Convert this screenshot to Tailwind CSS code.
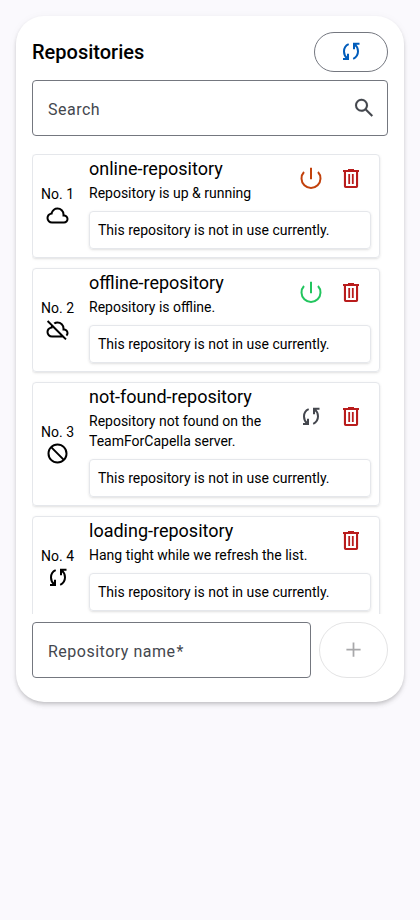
<!DOCTYPE html>
<html lang="en">
<head>
<meta charset="utf-8">
<title>Repositories</title>
<script src="https://cdn.jsdelivr.net/npm/@tailwindcss/browser@4"></script>
</head>
<body class="min-h-screen bg-[#faf9fd] p-4 font-['Roboto',sans-serif] text-sm text-black">
<svg class="hidden">
  <symbol id="sync" viewBox="0 0 24 24"><path fill="none" stroke="currentColor" stroke-width="2" d="M4 19H9V13.7M8.4 18.6C6.2 16.8 5 14.4 5 11.5C5 8.2 6.900 5.400 9.700 4.200M20.500 3.700H15V9.200M15.600 4.200C17.800 6 19 8.400 19 11.300C19 14.700 17.200 17.500 14.200 18.800"/></symbol>
  <symbol id="cloud" viewBox="20 -940 960 960"><path d="M260-160q-91 0-155.5-63T40-377q0-78 47-139t123-78q25-92 100-149t170-57q117 0 198.5 81.5T760-520q69 8 114.5 59.5T920-340q0 75-52.5 127.5T740-160H260Zm0-80h480q42 0 71-29t29-71q0-42-29-71t-71-29h-60v-80q0-83-58.5-141.5T480-720q-83 0-141.5 58.5T280-520h-20q-58 0-99 41t-41 99q0 58 41 99t99 41Z"/></symbol>
  <symbol id="cloud-off" viewBox="20 -940 960 960"><path d="M792-56 686-160H260q-92 0-156-64T40-380q0-77 47.5-137T210-594q3-8 6-15.5t6-16.5L56-792l56-56 736 736-56 56ZM260-240h346L284-562q-2 11-3 21t-1 21h-20q-58 0-99 41t-41 99q0 58 41 99t99 41Zm604 30-58-56q17-14 25.5-32.5T840-340q0-42-29-71t-71-29h-60v-80q0-83-58.5-141.5T480-720q-27 0-52 6.5T380-693l-58-58q35-24 74.5-36.5T480-800q117 0 198.5 81.5T760-520q69 8 114.5 59.5T920-340q0 39-15 72.5T864-210Z"/></symbol>
  <symbol id="block" viewBox="20 -940 960 960"><path d="M480-80q-83 0-156-31.5T197-197q-54-54-85.5-127T80-480q0-83 31.5-156T197-763q54-54 127-85.5T480-880q83 0 156 31.5T763-763q54 54 85.5 127T880-480q0 83-31.5 156T763-197q-54 54-127 85.5T480-80Zm0-80q54 0 104-17.5t92-50.5L228-676q-33 42-50.5 92T160-480q0 134 93 227t227 93Zm252-124q33-42 50.5-92T800-480q0-134-93-227t-227-93q-54 0-104 17.5T284-732l448 448Z"/></symbol>
  <symbol id="delete" viewBox="0 0 24 24"><path fill-rule="evenodd" d="M4 2.900H9V1.900H15V2.900H20V4.900H19.100V19.300Q19.100 21.100 17.300 21.100H6.700Q4.900 21.100 4.900 19.300V4.900H4ZM7 4.900V19H17V4.900ZM9.300 7.100H11.100V17H9.300ZM12.900 7.100H14.700V17H12.900Z"/></symbol>
  <symbol id="power" viewBox="0 0 28 28"><path fill="none" stroke="currentColor" stroke-width="2" d="M14 2.8V14.2M7 7A9.5 9.5 0 1 0 21 7"/></symbol>
  <symbol id="search" viewBox="0 -950 960 960"><path stroke="currentColor" stroke-width="4" d="M784-120 532-372q-30 24-69 38t-83 14q-109 0-184.500-75.500T120-580q0-109 75.500-184.500T380-840q109 0 184.500 75.500T640-580q0 44-14 83t-38 69l252 252-56 56ZM380-400q75 0 127.500-52.500T560-580q0-75-52.500-127.500T380-760q-75 0-127.500 52.500T200-580q0 75 52.500 127.500T380-400Z"/></symbol>
  <symbol id="add" viewBox="20 -945 960 960"><path d="M445-445H196v-70h249v-249h70v249h249v70H515v249h-70v-249Z"/></symbol>
</svg>

<main class="flex h-[686px] flex-col rounded-[28px] bg-white p-4 shadow-[0_2px_4px_-1px_rgba(0,0,0,0.2),0_4px_5px_0_rgba(0,0,0,0.06),0_1px_10px_0_rgba(0,0,0,0.04)]">
  <header class="flex h-10 items-center justify-between">
    <h1 class="text-xl font-medium leading-6">Repositories</h1>
    <button class="flex h-10 w-[74px] items-center justify-center rounded-full border border-[#74777f] text-[#005cbb]"><svg class="size-6 fill-current"><use href="#sync"/></svg></button>
  </header>

  <div class="mt-2 flex h-14 items-center justify-between rounded border border-[#74777f] pl-[15px] pr-[11px] text-[#44474e]">
    <span class="pt-1 text-base tracking-[0.5px]">Search</span>
    <svg class="size-6 fill-current"><use href="#search"/></svg>
  </div>

  <section class="mt-[18px] flex h-[460px] flex-col gap-2.5 overflow-hidden pr-2">
    <article class="flex shrink-0 items-center rounded border border-gray-200 pb-2 pl-2 pr-2 shadow-sm">
      <div class="flex w-12 shrink-0 flex-col pt-2 leading-5"><span>No. 1</span><svg class="ml-[5px] size-6 fill-current"><use href="#cloud"/></svg></div>
      <div class="min-w-0 grow">
        <div class="flex items-center justify-between">
          <div><h2 class="text-lg leading-7">online-repository</h2><p class="leading-5">Repository is up &amp; running</p></div>
          <div class="flex shrink-0"><span class="flex w-10 items-center justify-center text-[#c2410c]"><svg class="size-7 fill-current"><use href="#power"/></svg></span><span class="flex w-10 items-center justify-center text-[#b91c1c]"><svg class="size-6 fill-current"><use href="#delete"/></svg></span></div>
        </div>
        <div class="mt-2 rounded border border-gray-200 p-2 leading-5 shadow-sm">This repository is not in use currently.</div>
      </div>
    </article>

    <article class="flex shrink-0 items-center rounded border border-gray-200 pb-2 pl-2 pr-2 shadow-sm">
      <div class="flex w-12 shrink-0 flex-col pt-2 leading-5"><span>No. 2</span><svg class="ml-[5px] size-6 fill-current"><use href="#cloud-off"/></svg></div>
      <div class="min-w-0 grow">
        <div class="flex items-center justify-between">
          <div><h2 class="text-lg leading-7">offline-repository</h2><p class="leading-5">Repository is offline.</p></div>
          <div class="flex shrink-0"><span class="flex w-10 items-center justify-center text-[#22c55e]"><svg class="size-7 fill-current"><use href="#power"/></svg></span><span class="flex w-10 items-center justify-center text-[#b91c1c]"><svg class="size-6 fill-current"><use href="#delete"/></svg></span></div>
        </div>
        <div class="mt-2 rounded border border-gray-200 p-2 leading-5 shadow-sm">This repository is not in use currently.</div>
      </div>
    </article>

    <article class="flex shrink-0 items-center rounded border border-gray-200 pb-2 pl-2 pr-2 shadow-sm">
      <div class="flex w-12 shrink-0 flex-col pt-2 leading-5"><span>No. 3</span><svg class="ml-[5px] size-6 fill-current"><use href="#block"/></svg></div>
      <div class="min-w-0 grow">
        <div class="flex items-center justify-between">
          <div><h2 class="text-lg leading-7">not-found-repository</h2><p class="leading-5">Repository not found on the TeamForCapella server.</p></div>
          <div class="flex shrink-0"><span class="flex w-10 items-center justify-center text-[#44474e]"><svg class="size-6 fill-current"><use href="#sync"/></svg></span><span class="flex w-10 items-center justify-center text-[#b91c1c]"><svg class="size-6 fill-current"><use href="#delete"/></svg></span></div>
        </div>
        <div class="mt-2 rounded border border-gray-200 p-2 leading-5 shadow-sm">This repository is not in use currently.</div>
      </div>
    </article>

    <article class="flex shrink-0 items-center rounded border border-gray-200 pb-2 pl-2 pr-2 shadow-sm">
      <div class="flex w-12 shrink-0 flex-col pt-2 leading-5"><span>No. 4</span><svg class="ml-[5px] size-6 fill-current"><use href="#sync"/></svg></div>
      <div class="min-w-0 grow">
        <div class="flex items-center justify-between">
          <div><h2 class="text-lg leading-7">loading-repository</h2><p class="leading-5">Hang tight while we refresh the list.</p></div>
          <div class="flex shrink-0"><span class="flex w-10 items-center justify-center text-[#b91c1c]"><svg class="size-6 fill-current"><use href="#delete"/></svg></span></div>
        </div>
        <div class="mt-2 rounded border border-gray-200 p-2 leading-5 shadow-sm">This repository is not in use currently.</div>
      </div>
    </article>
  </section>

  <form class="mt-2 flex h-14 gap-2">
    <div class="flex w-[279px] items-center rounded border border-[#74777f] pl-[15px] text-[#44474e]"><span class="pt-1 text-base tracking-[0.5px]">Repository name<span class="ml-px">*</span></span></div>
    <button type="button" class="flex grow items-center justify-center rounded-full border border-[#1a1b1f]/12 text-[#1a1b1f]/38"><svg class="size-6 fill-current"><use href="#add"/></svg></button>
  </form>
</main>
</body>
</html>
